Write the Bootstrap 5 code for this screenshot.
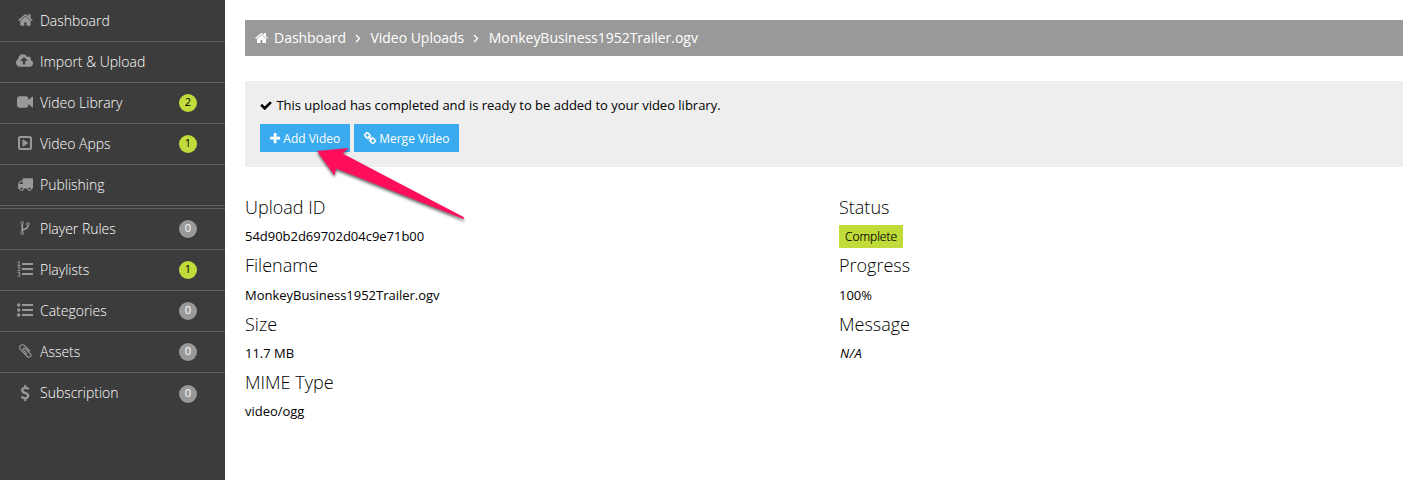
<!DOCTYPE html>
<html lang="en">
<head>
<meta charset="utf-8">
<meta name="viewport" content="width=device-width, initial-scale=1">
<title>Video Upload</title>
<link href="https://cdn.jsdelivr.net/npm/bootstrap@5.3.0/dist/css/bootstrap.min.css" rel="stylesheet">
<style>
body{font-family:"Open Sans",sans-serif;font-size:13px;color:#000;background:#fff;overflow:hidden}
.side{width:225px;height:480px;background:#3c3c3c;padding-top:1px}
.side .nav-link{height:41px;padding:0 28px 2px 15px;color:#fff;font-weight:300;font-size:14px;letter-spacing:-.01px;border-bottom:1px solid #626262}
.side .nav-item:last-child .nav-link{border:0}
.side .divided{border-top:1px solid #626262;margin-top:2px}
.ico{width:20px;margin-right:5px;color:#999;font-size:16px;line-height:1}
.fa{height:1em;fill:currentColor;display:block;overflow:visible}
.fa-in{display:inline-block;vertical-align:-.14em}
.notice p .fa-in{margin-right:1px}
.btn .fa-in{height:13px}
.count{width:18px;height:18px;border-radius:50%;background:#999;color:#fff;font-size:11px;font-weight:400;line-height:16px;margin-top:2px}
.count.on{background:#c1dc3a;color:#000}
.main{padding:20px 13px 0 20px}
.crumbs{height:36px;background:#999;color:#fff;font-size:14px;letter-spacing:-.03px;padding:0 10px}
.crumbs .fa{margin-right:6px}
.crumbs > span:not(.sep){margin-top:-2px}
.crumbs .sep{width:24.500px}
.notice{margin-top:25px;height:86px;background:#eee;padding:14px 15px}
.notice p{line-height:20px;margin-bottom:9px;letter-spacing:-.01px}
.btn-blue{--bs-btn-bg:#3aabee;--bs-btn-color:#fff;--bs-btn-border-width:0;--bs-btn-border-radius:0;--bs-btn-font-size:12px;--bs-btn-padding-y:0;--bs-btn-line-height:30px;--bs-btn-hover-bg:#2c98d8;--bs-btn-hover-color:#fff;height:28px;padding-left:10px;padding-right:0;text-align:left;white-space:nowrap}
.btn-add{width:90px}
.btn-merge{width:105px}
.info{--bs-gutter-x:30px;margin-top:26px}
.info dt{font-size:18px;font-weight:300;line-height:29px}
.info dd{line-height:29px;margin:0;letter-spacing:-.02px}
.info dd:nth-of-type(2){line-height:30px}
.info em{padding-left:1px;letter-spacing:.4px}
.tag{background:#c1dc3a;font-size:12px;font-weight:300;line-height:23px;height:23px;padding:0 6px;display:inline-block;vertical-align:top;margin-top:3px;-webkit-text-stroke:.2px #000}
.pointer{left:310px;top:140px}
</style>
</head>
<body>
<svg class="d-none">
<symbol id="home" viewBox="64 0 1664 1792"><path d="M1472 992v480q0 26-19 45t-45 19h-384v-384h-256v384h-384q-26 0-45-19t-19-45v-480q0-1 .5-3t.5-3l575-474 575 474q1 2 1 6zm223-69l-62 74q-8 9-21 11h-3q-13 0-21-7l-692-577-692 577q-12 8-24 7-13-2-21-11l-62-74q-8-10-7-23.5t11-21.5l719-599q32-26 76-26t76 26l244 204v-195q0-14 9-23t23-9h192q14 0 23 9t9 23v408l219 182q10 8 11 21.5t-7 23.5z"/></symbol>
</svg>
<div class="d-flex">
<aside class="side flex-shrink-0">
<ul class="nav flex-column flex-nowrap">
<li class="nav-item"><a class="nav-link d-flex align-items-center" href="#"><span class="ico d-flex justify-content-center"><svg class="fa" viewBox="64 0 1664 1792"><use href="#home" x="64" y="0" width="1664" height="1792"/></svg></span>Dashboard</a></li>
<li class="nav-item"><a class="nav-link d-flex align-items-center" href="#"><span class="ico d-flex justify-content-center"><svg class="fa" viewBox="-64 0 1920 1792"><path d="M1216 864q0-14-9-23l-352-352q-9-9-23-9t-23 9l-351 351q-10 12-10 24 0 14 9 23t23 9h224v352q0 13 9.5 22.5t22.5 9.5h192q13 0 22.500-9.500t9.500-22.500v-352h224q13 0 22.500-9.500t9.500-22.500zm640 288q0 159-112.500 271.500t-271.500 112.500h-1088q-185 0-316.500-131.500t-131.500-316.500q0-130 70-240t188-165q-2-30-2-43 0-212 150-362t362-150q156 0 285.500 87t188.500 231q71-62 166-62 106 0 181 75t75 181q0 76-41 138 130 31 213.500 135.500t83.500 238.500z"/></svg></span>Import &amp; Upload</a></li>
<li class="nav-item"><a class="nav-link d-flex align-items-center" href="#"><span class="ico d-flex justify-content-center"><svg class="fa" viewBox="0 0 1792 1792"><path d="M1792 352v1088q0 42-39 59-13 5-25 5-27 0-45-19l-403-403v166q0 119-84.500 203.500t-203.500 84.500h-704q-119 0-203.500-84.500t-84.500-203.500v-704q0-119 84.500-203.500t203.500-84.500h704q119 0 203.500 84.500t84.500 203.500v165l403-402q18-19 45-19 12 0 25 5 39 17 39 59z"/></svg></span>Video Library<span class="count on ms-auto text-center">2</span></a></li>
<li class="nav-item"><a class="nav-link d-flex align-items-center" href="#"><span class="ico d-flex justify-content-center"><svg class="fa" viewBox="0 0 16 16"><rect x="2" y="2" width="12" height="12" rx="1.500" fill="none" stroke="currentColor" stroke-width="2"/><path d="M5.500 4.800q.2-.5.700-.2l4.600 3q.4.400 0 .8l-4.600 3q-.5.300-.7-.2z"/></svg></span>Video Apps<span class="count on ms-auto text-center">1</span></a></li>
<li class="nav-item"><a class="nav-link d-flex align-items-center" href="#"><span class="ico d-flex justify-content-center"><svg class="fa" viewBox="0 0 1792 1792"><path d="M640 1408q0-52-38-90t-90-38-90 38-38 90 38 90 90 38 90-38 38-90zm-384-512h384v-256h-158q-13 0-22 9l-195 195q-9 9-9 22v30zm1280 512q0-52-38-90t-90-38-90 38-38 90 38 90 90 38 90-38 38-90zm256-1088v1024q0 15-4 26.500t-13.500 18.500-16.500 11.500-23.500 6-22.500 2-25.500 0-22.500-.5q0 106-75 181t-181 75-181-75-75-181h-384q0 106-75 181t-181 75-181-75-75-181h-64q-3 0-22.500.5t-25.500 0-22.500-2-23.500-6-16.500-11.500-13.500-18.500-4-26.500q0-26 19-45t45-19v-320q0-8-.5-35t0-38 2.500-34.500 6.500-37 14-30.500 22.500-30l198-198q19-19 50.500-32t58.500-13h160v-192q0-26 19-45t45-19h1024q26 0 45 19t19 45z"/></svg></span>Publishing</a></li>
<li class="nav-item divided"><a class="nav-link d-flex align-items-center" href="#"><span class="ico d-flex justify-content-center"><svg class="fa" viewBox="328 0 1024 1792"><path d="M672 1472q0-40-28-68t-68-28-68 28-28 68 28 68 68 28 68-28 28-68zm0-1152q0-40-28-68t-68-28-68 28-28 68 28 68 68 28 68-28 28-68zm640 128q0-40-28-68t-68-28-68 28-28 68 28 68 68 28 68-28 28-68zm96 0q0 52-26 96.500t-70 69.500q-2 287-226 414-67 38-203 81-128 40-169.500 71t-41.500 100v26q44 25 70 69.500t26 96.500q0 80-56 136t-136 56-136-56-56-136q0-52 26-96.500t70-69.500v-820q-44-25-70-69.500t-26-96.500q0-80 56-136t136-56 136 56 56 136q0 52-26 96.500t-70 69.500v497q54-26 154-57 55-17 87.500-29.500t70.500-31 59-39.500 40.500-51 28-69.500 8.500-91.500q-44-25-70-69.500t-26-96.500q0-80 56-136t136-56 136 56 56 136z"/></svg></span>Player Rules<span class="count ms-auto text-center">0</span></a></li>
<li class="nav-item"><a class="nav-link d-flex align-items-center" href="#"><span class="ico d-flex justify-content-center"><svg class="fa" viewBox="0 0 16 16"><path d="M5 2h11v2H5zM5 7h11v2H5zM5 12h11v2H5z"/><path d="M.7 1.200 2 .3V4.500M.5 4.500h3M.6 6.500q2.500-1.300 2.500.3Q3 7.700.8 9.700h2.700M.6 11.700h2.500L2 13.200q1.500.2 1.200 1.400-.7 1.200-2.700.4" fill="none" stroke="currentColor"/></svg></span>Playlists<span class="count on ms-auto text-center">1</span></a></li>
<li class="nav-item"><a class="nav-link d-flex align-items-center" href="#"><span class="ico d-flex justify-content-center"><svg class="fa" viewBox="0 0 16 16"><path d="M5 2h11v2H5zM5 7h11v2H5zM5 12h11v2H5z"/><circle cx="1.700" cy="3" r="1.700"/><circle cx="1.700" cy="8" r="1.700"/><circle cx="1.700" cy="13" r="1.700"/></svg></span>Categories<span class="count ms-auto text-center">0</span></a></li>
<li class="nav-item"><a class="nav-link d-flex align-items-center" href="#"><span class="ico d-flex justify-content-center"><svg class="fa" viewBox="192 0 1408 1792"><path d="M1596 1385q0 117-79 196t-196 79q-135 0-235-100l-777-776q-113-115-113-271 0-159 110-270t269-111q158 0 273 113l605 606q10 10 10 22 0 16-30.500 46.500t-46.500 30.500q-13 0-23-10l-606-607q-79-77-181-77-106 0-179 75t-73 181q0 105 76 181l776 777q63 63 145 63 64 0 106-42t42-106q0-82-63-145l-581-581q-26-24-60-24-29 0-48 19t-19 48q0 32 25 59l410 410q10 10 10 22 0 16-31 47t-47 31q-12 0-22-10l-410-410q-63-61-63-149 0-82 57-139t139-57q88 0 149 63l581 581q100 98 100 235z"/></svg></span>Assets<span class="count ms-auto text-center">0</span></a></li>
<li class="nav-item"><a class="nav-link d-flex align-items-center" href="#"><span class="ico d-flex justify-content-center"><svg class="fa" viewBox="328 0 1024 1792"><path stroke="currentColor" stroke-width="30" d="M1362 1185q0 153-99.500 263.500t-258.500 136.500v175q0 14-9 23t-23 9h-135q-13 0-22.500-9.500t-9.500-22.500v-175q-66-9-127.500-31t-101.500-44.500-74-48-46.500-37.500-17.500-18q-17-21-2-41l103-135q7-10 23-12 15-2 24 9l2 2q113 99 243 125 37 8 74 8 81 0 142.500-43t61.500-122q0-28-15-53t-33.500-42-58.500-37.500-66-32-80-32.500q-39-16-61.500-25t-61.500-26.500-62.500-31-56.500-35.500-53.500-42.500-43.500-49-35.500-58-21-66.500-8.500-78q0-138 98-242t255-134v-180q0-13 9.500-22.500t22.500-9.500h135q14 0 23 9t9 23v176q57 6 110.500 23t87 33.500 63.500 37.500 39 29 15 14q17 18 5 38l-81 146q-8 15-23 16-14 3-27-7-3-3-14.500-12t-39-26.500-58.500-32-74.500-26-85.500-11.500q-95 0-155 43t-60 111q0 26 8.500 48t29.500 41.500 39.500 33 56 31 60.500 27 70 27.500q53 20 81 31.500t76 35 75.500 42.500 62 50 53 63.500 31.500 76.500 13 94z"/></svg></span>Subscription<span class="count ms-auto text-center">0</span></a></li>
</ul>
</aside>
<main class="main flex-grow-1">
<nav class="crumbs d-flex align-items-center">
<svg class="fa" viewBox="64 0 1664 1792"><use href="#home" x="64" y="0" width="1664" height="1792"/></svg><span>Dashboard</span>
<span class="sep d-flex justify-content-center"><svg width="6" height="9" viewBox="0 0 6 9"><path d="M1 1l3.500 3.500L1 8" fill="none" stroke="#fff" stroke-width="1.400"/></svg></span><span>Video Uploads</span>
<span class="sep d-flex justify-content-center"><svg width="6" height="9" viewBox="0 0 6 9"><path d="M1 1l3.500 3.500L1 8" fill="none" stroke="#fff" stroke-width="1.400"/></svg></span><span>MonkeyBusiness1952Trailer.ogv</span>
</nav>
<section class="notice">
<p><svg class="fa fa-in" viewBox="64 0 1664 1792"><path d="M1671 566q0 40-28 68l-724 724-136 136q-28 28-68 28t-68-28l-136-136-362-362q-28-28-28-68t28-68l136-136q28-28 68-28t68 28l294 295 656-657q28-28 68-28t68 28l136 136q28 28 28 68z"/></svg> This upload has completed and is ready to be added to your video library.</p>
<div class="d-flex gap-1">
<a class="btn btn-blue btn-add" href="#"><svg class="fa fa-in" viewBox="192 0 1408 1792"><path d="M1600 736v192q0 40-28 68t-68 28h-416v416q0 40-28 68t-68 28h-192q-40 0-68-28t-28-68v-416h-416q-40 0-68-28t-28-68v-192q0-40 28-68t68-28h416v-416q0-40 28-68t68-28h192q40 0 68 28t28 68v416h416q40 0 68 28t28 68z"/></svg> Add Video</a>
<a class="btn btn-blue btn-merge" href="#"><svg class="fa fa-in" viewBox="64 0 1664 1792"><path stroke="currentColor" stroke-width="40" d="M1520 1216q0-40-28-68l-208-208q-28-28-68-28-42 0-72 32 3 3 19 18.500t21.500 21.500 15 19 13 25.500 3.500 27.500q0 40-28 68t-68 28q-15 0-27.500-3.500t-25.500-13-19-15-21.500-21.500-18.500-19q-33 31-33 73 0 40 28 68l206 207q27 27 68 27 40 0 68-26l147-146q28-28 28-67zm-703-705q0-40-28-68l-206-207q-28-28-68-28-39 0-68 27l-147 146q-28 28-28 67 0 40 28 68l208 208q27 27 68 27 42 0 72-31-3-3-19-18.500t-21.500-21.500-15-19-13-25.500-3.500-27.500q0-40 28-68t68-28q15 0 27.500 3.500t25.500 13 19 15 21.500 21.500 18.500 19q33-31 33-73zm895 705q0 120-85 203l-147 146q-83 83-203 83-121 0-204-85l-206-207q-83-83-83-203 0-123 88-209l-88-88q-86 88-208 88-120 0-204-84l-208-208q-84-84-84-204t85-203l147-146q83-83 203-83 121 0 204 85l206 207q83 83 83 203 0 123-88 209l88 88q86-88 208-88 120 0 204 84l208 208q84 84 84 204z"/></svg> Merge Video</a>
</div>
</section>
<div class="row info">
<dl class="col-6 mb-0"><dt>Upload ID</dt><dd>54d90b2d69702d04c9e71b00</dd><dt>Filename</dt><dd>MonkeyBusiness1952Trailer.ogv</dd><dt>Size</dt><dd>11.7 MB</dd><dt>MIME Type</dt><dd>video/ogg</dd></dl>
<dl class="col-6 mb-0"><dt>Status</dt><dd><span class="tag">Complete</span></dd><dt>Progress</dt><dd>100%</dd><dt>Message</dt><dd><em>N/A</em></dd></dl>
</div>
</main>
</div>
<!-- Callout arrow laid over the Add Video button -->
<svg class="pointer position-absolute pe-none" width="165" height="90" viewBox="310 140 165 90"><path d="M317 151 348.500 148 342.500 153.500 463.500 217q1.500 1.500 0 2L336 168.500 334.500 175.500z" fill="#ff0f5b" style="filter:drop-shadow(0 2px 1.500px rgba(0,0,0,.6))"/></svg>
<script src="https://cdn.jsdelivr.net/npm/bootstrap@5.3.0/dist/js/bootstrap.bundle.min.js"></script>
</body>
</html>
